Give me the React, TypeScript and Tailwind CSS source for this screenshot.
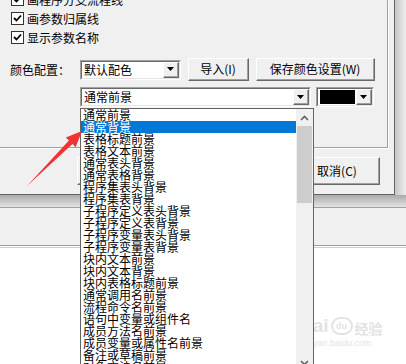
import React from "react";

const items = [
  "通常前景",
  "通常背景",
  "表格标题前景",
  "表格文本前景",
  "通常表头背景",
  "通常表格背景",
  "程序集表头背景",
  "程序集表背景",
  "子程序定义表头背景",
  "子程序定义表背景",
  "子程序变量表头背景",
  "子程序变量表背景",
  "块内文本前景",
  "块内文本背景",
  "块内表格标题前景",
  "通常调用名前景",
  "流程命令名前景",
  "语句中变量或组件名",
  "成员方法名前景",
  "成员变量或属性名前景",
  "备注或草稿前景",
  "对象方法名前景",
];

const checks = ["画程序分支流程线", "画参数归属线", "显示参数名称"];

function DownTriangle() {
  return (
    <svg width="7" height="4" viewBox="0 0 7 4">
      <polygon points="0,0 7,0 3.5,4" fill="#000" />
    </svg>
  );
}

function Raised({ className = "", children }: { className?: string; children?: React.ReactNode }) {
  return (
    <div className={`bg-[#f0f0f0] border border-t-white border-l-white border-r-[#696969] border-b-[#696969] ${className}`}>
      <div className="w-full h-full flex items-center justify-center border-r border-b border-[#a0a0a0]">
        {children}
      </div>
    </div>
  );
}

function Combo({ className = "", children }: { className?: string; children?: React.ReactNode }) {
  return (
    <div className={`h-[20px] border border-t-[#a0a0a0] border-l-[#a0a0a0] border-r-white border-b-white ${className}`}>
      <div className="h-full flex items-center bg-white border border-t-[#696969] border-l-[#696969] border-r-[#e3e3e3] border-b-[#e3e3e3]">
        <div className="flex-1 min-w-0 h-full flex items-center">{children}</div>
        <Raised className="w-[16px] h-[16px]">
          <DownTriangle />
        </Raised>
      </div>
    </div>
  );
}

function CheckBox() {
  return (
    <div className="w-[13px] h-[13px] border border-[#333] bg-white flex items-center justify-center">
      <svg width="9" height="9" viewBox="0 0 9 9">
        <polyline points="1,4 3.5,6.5 8,1.5" fill="none" stroke="#000" strokeWidth="1.8" />
      </svg>
    </div>
  );
}

export default function App() {
  return (
    <div className="relative w-[406px] h-[364px] overflow-hidden bg-white text-black text-[12px] font-['Noto_Sans_CJK_SC',sans-serif]">
      {/* Dialog */}
      <div className="flex h-[195px]">
        <div className="w-[395px] h-full bg-[#f0f0f0] border-r border-b border-[#646464] flex flex-col">
          {/* Group box */}
          <div className="w-[388px] h-[148px] shrink-0 overflow-hidden border-r border-b border-[#a0a0a0] shadow-[1px_1px_0_#ffffff]">
            <div className="-mt-[10px]">
              {checks.map((c) => (
                <div key={c} className="h-[19px] flex items-center pl-[11px] gap-[3px]">
                  <CheckBox />
                  <span className="leading-[14px]">{c}</span>
                </div>
              ))}
            </div>

            <div className="mt-[11px] h-[23px] flex items-center pl-[10px]">
              <span className="w-[70px] leading-[14px]">颜色配置：</span>
              <Combo className="w-[101px]">
                <span className="pl-[2px] leading-[14px]">默认配色</span>
              </Combo>
              <Raised className="ml-[7px] w-[61px] h-[23px]">导入(I)</Raised>
              <Raised className="ml-[7px] w-[119px] h-[23px]">保存颜色设置(W)</Raised>
            </div>

            <div className="mt-[6px] h-[20px] flex items-center pl-[80px]">
              <Combo className="w-[231px]">
                <span className="pl-[2px] leading-[14px]">通常前景</span>
              </Combo>
              <Combo className="ml-[5px] w-[58px]">
                <div className="ml-[2px] mr-[1px] h-[14px] flex-1 bg-black" />
              </Combo>
            </div>
          </div>

          {/* Dialog buttons */}
          <div className="mt-[9px] h-[28px] flex pl-[77px]">
            <Raised className="w-[85px] h-[28px]">确定(O)</Raised>
            <Raised className="ml-[133px] w-[85px] h-[28px]">取消(C)</Raised>
          </div>
        </div>
        <div className="flex-1 bg-gradient-to-r from-[#c6c6c6] to-[#eeeeee]" />
      </div>

      {/* Window underneath */}
      <div className="h-[12px] bg-gradient-to-b from-[#aaaaaa] to-[#e4e4e4]" />
      <div className="h-[39px] bg-[#f0f0f0] border-t border-b border-[#a0a0a0]" />
      <div className="h-[1px] mt-[1px] bg-[#cfcfcf]" />

      {/* Watermark */}
      <div className="absolute left-[299px] top-[316px] text-[#e3e3e3] leading-none">
        <div className="flex items-end gap-[2px]">
          <span className="font-['Liberation_Sans',sans-serif] font-bold text-[19px]">Bai</span>
          <span className="w-[22px] h-[18px] rounded-full border-2 border-[#e3e3e3] flex items-center justify-center font-['Liberation_Sans',sans-serif] font-bold text-[9px]">
            du
          </span>
          <span className="text-[14px] font-bold">经验</span>
        </div>
        <div className="mt-[4px] font-['Liberation_Sans',sans-serif] text-[9px]">jingyan.baidu.com</div>
      </div>

      {/* Dropdown list */}
      <div className="absolute left-[80px] top-[108px] w-[234px] h-[264px] border border-[#646464] bg-white flex">
        <div className="flex-1 min-w-0">
          {items.map((it, i) => (
            <div
              key={it}
              className={`h-[12px] leading-[12px] pl-[2px] whitespace-nowrap ${i === 1 ? "bg-[#0078d7] text-white" : ""}`}
            >
              {it}
            </div>
          ))}
        </div>
        <div className="w-[17px] bg-[#f0f0f0] flex flex-col">
          <div className="h-[17px] flex items-center justify-center">
            <svg width="9" height="6" viewBox="0 0 9 6">
              <polyline points="1,5 4.5,1.5 8,5" fill="none" stroke="#606060" strokeWidth="1.6" />
            </svg>
          </div>
          <div className="h-[77px] mx-[1px] bg-[#cdcdcd]" />
          <div className="flex-1" />
          <div className="h-[17px] flex items-center justify-center">
            <svg width="9" height="6" viewBox="0 0 9 6">
              <polyline points="1,1 4.5,4.5 8,1" fill="none" stroke="#606060" strokeWidth="1.6" />
            </svg>
          </div>
        </div>
      </div>

      {/* Red annotation arrow */}
      <svg className="absolute left-0 top-0 pointer-events-none" width="406" height="364" viewBox="0 0 406 364">
        <polygon
          points="82,131 65.8,137.4 68.9,140.5 27,186 72.5,144.1 75.6,147.3"
          fill="#f33333"
        />
      </svg>
    </div>
  );
}
